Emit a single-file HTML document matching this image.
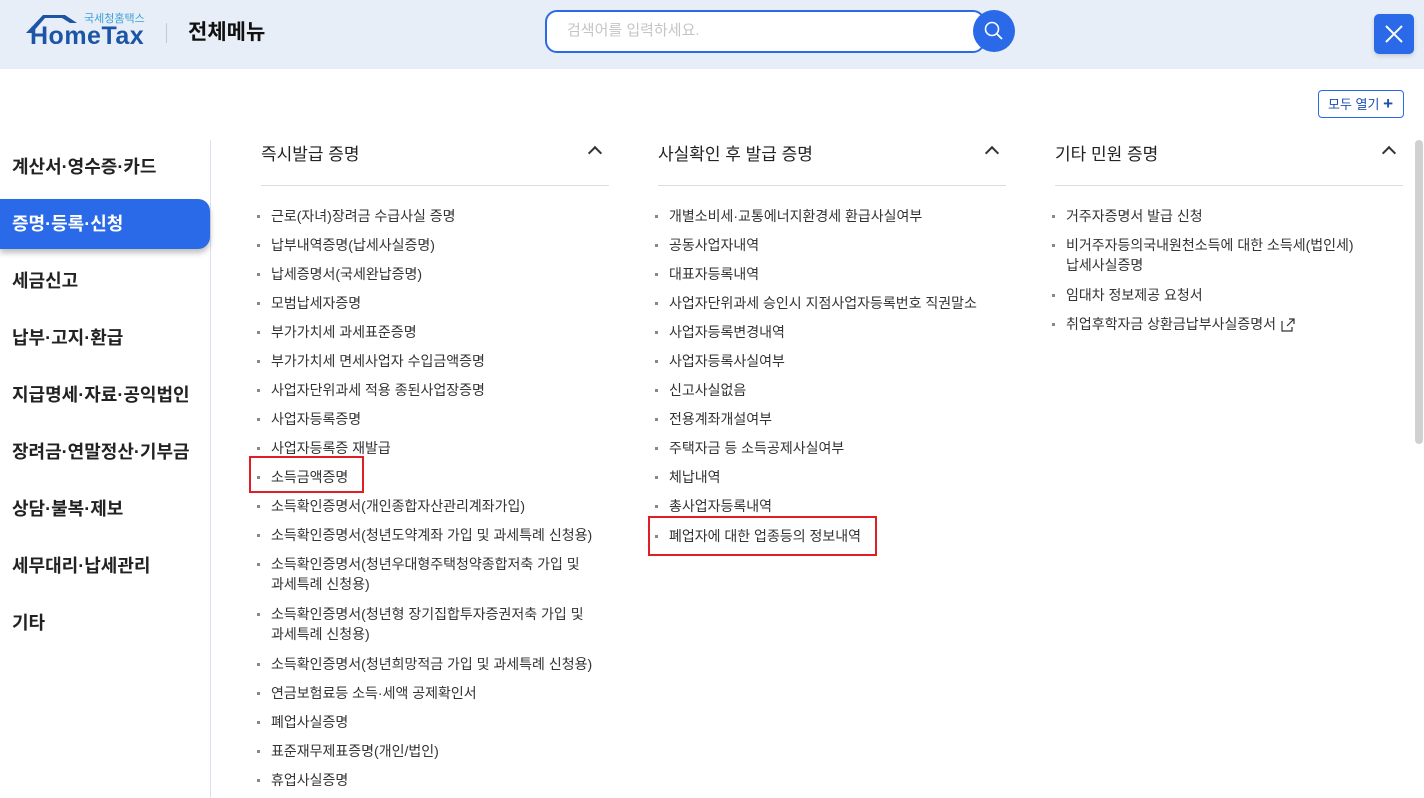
<!DOCTYPE html>
<html><head><meta charset="utf-8"><style>
*{margin:0;padding:0;box-sizing:border-box}
body{width:1424px;height:798px;overflow:hidden;background:#fff;font-family:"Liberation Sans","Noto Sans CJK KR",sans-serif;color:#222;position:relative}
.hdr{position:absolute;left:0;top:0;width:1424px;height:69px;background:#e8eef8}
.a{position:absolute;white-space:nowrap}
.m{position:absolute;left:12px;font-size:18px;font-weight:bold;color:#222;line-height:24px}
.h{position:absolute;font-size:17px;color:#222;line-height:22px}
.it{position:absolute;font-size:14px;color:#333;line-height:20px;white-space:nowrap}
.it:before{content:"";position:absolute;left:-14px;top:9px;width:3px;height:3px;background:#888}
.ln{position:absolute;top:185px;height:1px;background:#ddd;width:348px}
.chev{position:absolute;top:148px;width:10px;height:10px;border-left:2px solid #333;border-top:2px solid #333;transform:rotate(45deg)}
.red{position:absolute border:2px solid #e01e25}
.red{position:absolute;border:2px solid #e01e25}
</style></head><body>
<div class="hdr"></div>
<svg class="a" style="left:25px;top:12px" width="60" height="24" viewBox="0 0 60 24">
<path d="M1 21 L18 3 L40 3 L52 11 L45 11 L37 6 L20 6 L7 21 Z" fill="#1d55a6"/>
</svg>
<div class="a" style="left:84px;top:12px;font-size:11px;color:#3aa0d8;line-height:14px">국세청홈택스</div>
<div class="a" style="left:30px;top:22px;font-size:25px;font-weight:bold;color:#1d55a6;letter-spacing:0.5px;line-height:28px">HomeTax</div>
<div class="a" style="left:166px;top:23px;width:1px;height:20px;background:#c5c9d0"></div>
<div class="a" style="left:188px;top:19px;font-size:21px;font-weight:bold;color:#111;line-height:28px">전체메뉴</div>
<div class="a" style="left:545px;top:10px;width:440px;height:43px;border:2px solid #2a6ae8;border-radius:12px;background:#fff"></div>
<div class="a" style="left:567px;top:21px;font-size:15px;color:#c5c5c5;line-height:20px">검색어를 입력하세요.</div>
<div class="a" style="left:973px;top:10px;width:42px;height:42px;border-radius:50%;background:#2a6ae8"></div>
<svg class="a" style="left:983px;top:20px" width="22" height="22" viewBox="0 0 22 22"><circle cx="9" cy="9" r="6.5" stroke="#fff" stroke-width="1.6" fill="none"/><path d="M14 14 L19 19" stroke="#fff" stroke-width="1.8"/></svg>
<div class="a" style="left:1374px;top:14px;width:40px;height:40px;border-radius:5px;background:#2a6ae8;box-shadow:0 2px 4px rgba(0,0,0,.15)"></div>
<svg class="a" style="left:1384px;top:24px" width="20" height="20"><path d="M2 2L18 18M18 2L2 18" stroke="#fff" stroke-width="2"/></svg>
<div class="a" style="left:1318px;top:90px;width:86px;height:28px;border:1px solid #2a6ae8;border-radius:4px"></div>
<div class="a" style="left:1328px;top:95px;font-size:13px;color:#1d4fb0;line-height:18px">모두 열기 <b style="font-size:17px">+</b></div>

<div class="a" style="left:210px;top:140px;width:1px;height:658px;background:#dfe1ea"></div>
<div class="a" style="left:0;top:199px;width:210px;height:50px;background:#2a6ae8;border-radius:0 12px 12px 0;box-shadow:0 4px 6px rgba(0,0,0,.25)"></div>
<div class="m" style="top:155px">계산서·영수증·카드</div>
<div class="m" style="top:212px;color:#fff">증명·등록·신청</div>
<div class="m" style="top:269px">세금신고</div>
<div class="m" style="top:326px">납부·고지·환급</div>
<div class="m" style="top:383px">지급명세·자료·공익법인</div>
<div class="m" style="top:440px">장려금·연말정산·기부금</div>
<div class="m" style="top:497px">상담·불복·제보</div>
<div class="m" style="top:554px">세무대리·납세관리</div>
<div class="m" style="top:611px">기타</div>

<div class="h" style="left:261px;top:144px">즉시발급 증명</div>
<div class="h" style="left:658px;top:144px">사실확인 후 발급 증명</div>
<div class="h" style="left:1055px;top:144px">기타 민원 증명</div>
<div class="chev" style="left:590px"></div><div class="chev" style="left:987px"></div><div class="chev" style="left:1384px"></div>
<div class="ln" style="left:261px"></div><div class="ln" style="left:658px"></div><div class="ln" style="left:1055px"></div>

<div class="it" style="left:271px;top:206px">근로(자녀)장려금 수급사실 증명</div>
<div class="it" style="left:271px;top:235px">납부내역증명(납세사실증명)</div>
<div class="it" style="left:271px;top:264px">납세증명서(국세완납증명)</div>
<div class="it" style="left:271px;top:293px">모범납세자증명</div>
<div class="it" style="left:271px;top:322px">부가가치세 과세표준증명</div>
<div class="it" style="left:271px;top:351px">부가가치세 면세사업자 수입금액증명</div>
<div class="it" style="left:271px;top:380px">사업자단위과세 적용 종된사업장증명</div>
<div class="it" style="left:271px;top:409px">사업자등록증명</div>
<div class="it" style="left:271px;top:438px">사업자등록증 재발급</div>
<div class="it" style="left:271px;top:467px">소득금액증명</div>
<div class="it" style="left:271px;top:496px">소득확인증명서(개인종합자산관리계좌가입)</div>
<div class="it" style="left:271px;top:525px">소득확인증명서(청년도약계좌 가입 및 과세특례 신청용)</div>
<div class="it" style="left:271px;top:554px">소득확인증명서(청년우대형주택청약종합저축 가입 및<br>과세특례 신청용)</div>
<div class="it" style="left:271px;top:604px">소득확인증명서(청년형 장기집합투자증권저축 가입 및<br>과세특례 신청용)</div>
<div class="it" style="left:271px;top:654px">소득확인증명서(청년희망적금 가입 및 과세특례 신청용)</div>
<div class="it" style="left:271px;top:683px">연금보험료등 소득·세액 공제확인서</div>
<div class="it" style="left:271px;top:712px">폐업사실증명</div>
<div class="it" style="left:271px;top:741px">표준재무제표증명(개인/법인)</div>
<div class="it" style="left:271px;top:770px">휴업사실증명</div>

<div class="it" style="left:669px;top:206px">개별소비세·교통에너지환경세 환급사실여부</div>
<div class="it" style="left:669px;top:235px">공동사업자내역</div>
<div class="it" style="left:669px;top:264px">대표자등록내역</div>
<div class="it" style="left:669px;top:293px">사업자단위과세 승인시 지점사업자등록번호 직권말소</div>
<div class="it" style="left:669px;top:322px">사업자등록변경내역</div>
<div class="it" style="left:669px;top:351px">사업자등록사실여부</div>
<div class="it" style="left:669px;top:380px">신고사실없음</div>
<div class="it" style="left:669px;top:409px">전용계좌개설여부</div>
<div class="it" style="left:669px;top:438px">주택자금 등 소득공제사실여부</div>
<div class="it" style="left:669px;top:467px">체납내역</div>
<div class="it" style="left:669px;top:496px">총사업자등록내역</div>
<div class="it" style="left:669px;top:526px">폐업자에 대한 업종등의 정보내역</div>

<div class="it" style="left:1066px;top:206px">거주자증명서 발급 신청</div>
<div class="it" style="left:1066px;top:235px">비거주자등의국내원천소득에 대한 소득세(법인세)<br>납세사실증명</div>
<div class="it" style="left:1066px;top:285px">임대차 정보제공 요청서</div>
<div class="it" style="left:1066px;top:314px">취업후학자금 상환금납부사실증명서</div>
<svg class="a" style="left:1281px;top:318px" width="14" height="14"><path d="M1 3V13H11V9M6 8L13 1M8 1H13V6" stroke="#333" stroke-width="1.2" fill="none"/></svg>

<div class="red" style="left:249px;top:456px;width:115px;height:37px"></div>
<div class="red" style="left:648px;top:516px;width:229px;height:40px"></div>
<div class="a" style="left:1415px;top:140px;width:8px;height:304px;background:#d0d0d0;border-radius:4px"></div>
</body></html>
